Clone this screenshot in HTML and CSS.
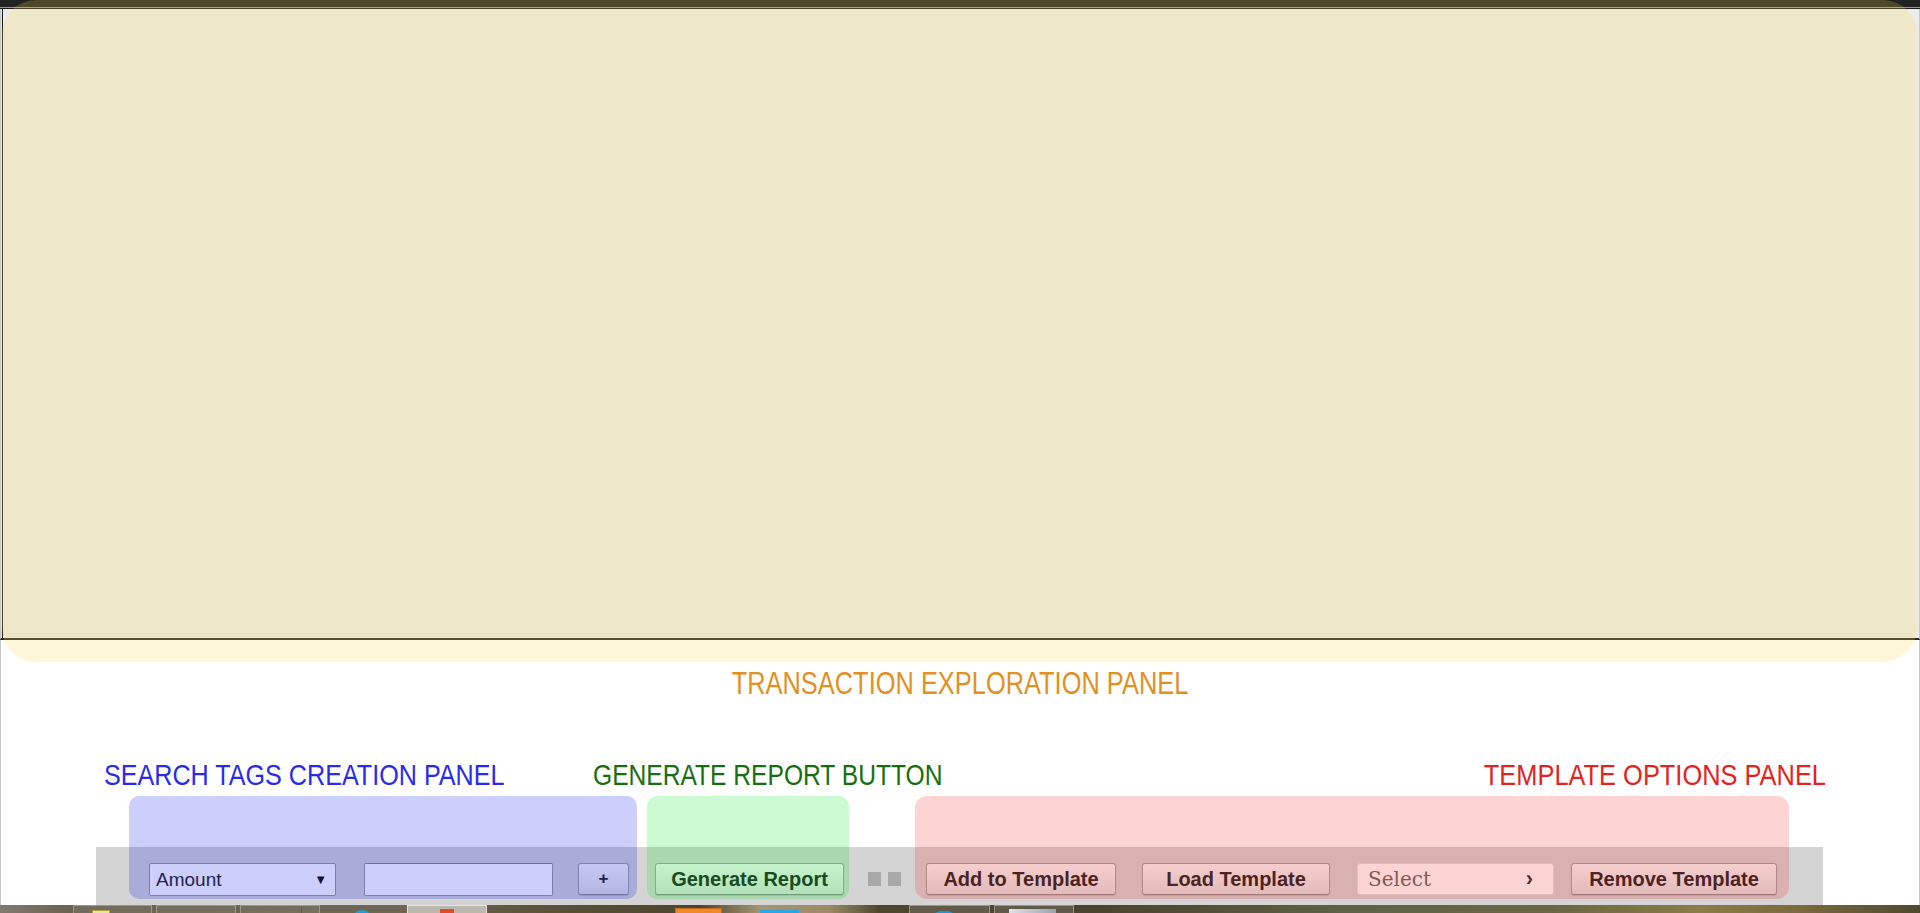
FILE: index.html
```html
<!DOCTYPE html>
<html lang="en">
<head>
<meta charset="utf-8">
<title>Transaction Explorer</title>
<link rel="stylesheet" href="styles.css">
</head>
<body>
<div class="app">
  <div class="topbar"></div>
  <main class="explorer"></main>
  <section class="lower">
    <h2 class="label label-transaction">TRANSACTION EXPLORATION PANEL</h2>
    <div class="label-row">
      <h2 class="label label-search">SEARCH TAGS CREATION PANEL</h2>
      <h2 class="label label-generate">GENERATE REPORT BUTTON</h2>
      <h2 class="label label-template">TEMPLATE OPTIONS PANEL</h2>
    </div>
    <div class="toolbar">
      <div class="field-select"><span>Amount</span><span class="caret">&#9660;</span></div>
      <input class="field-text" type="text">
      <button class="btn btn-plus">+</button>
      <button class="btn btn-generate">Generate Report</button>
      <div class="grip"><span></span><span></span></div>
      <button class="btn btn-add">Add to Template</button>
      <button class="btn btn-load">Load Template</button>
      <div class="template-select"><span>Select</span><span class="chev">&#8250;</span></div>
      <button class="btn btn-remove">Remove Template</button>
    </div>
  </section>
  <footer class="taskbar">
    <div class="tb-btn tb-b1"><i class="ic ic-yellow"></i></div>
    <div class="tb-btn tb-b2"></div>
    <div class="tb-btn tb-b3"><i class="ic ic-red"></i></div>
    <i class="ic ic-globe"></i>
    <div class="tb-btn tb-active"><i class="ic ic-orange-sm"></i></div>
    <i class="ic ic-orange"></i>
    <i class="ic ic-blue"></i>
    <div class="tb-btn tb-b4"><i class="ic ic-blue-sm"></i></div>
    <div class="tb-btn tb-b5"><i class="ic ic-gray"></i></div>
  </footer>
</div>
<div class="overlay overlay-yellow"></div>
<div class="overlay overlay-blue"></div>
<div class="overlay overlay-green"></div>
<div class="overlay overlay-red"></div>
</body>
</html>
```
FILE: styles.css
```css
* { box-sizing: border-box; }
html, body { margin: 0; padding: 0; }
body {
  width: 1920px;
  height: 913px;
  overflow: hidden;
  background: #fff;
  position: relative;
  font-family: "Liberation Sans", Arial, sans-serif;
}
.app {
  display: flex;
  flex-direction: column;
  height: 913px;
}
.topbar {
  height: 9px;
  flex: none;
  background: linear-gradient(#222 0 7px, #969696 7px 8px, #1b1b1b 8px 9px);
}
.explorer {
  height: 631px;
  flex: none;
  background: #ececec;
  border-left: 1px solid #c8c8c8;
  border-right: 1px solid #c8c8c8;
  border-bottom: 2px solid #2a2a2a;
  box-shadow: inset 1px 0 0 #e6e6e6, inset 2px 0 0 #1a1a1a;
}
.lower {
  height: 265px;
  flex: none;
  border-left: 1px solid #c8c8c8;
  border-right: 1px solid #c8c8c8;
  display: flex;
  flex-direction: column;
}
.label {
  margin: 0;
  font-family: "Liberation Sans", "Open Sans", sans-serif;
  font-weight: normal;
  font-size: 30px;
  line-height: 36px;
  height: 36px;
  white-space: nowrap;
  transform: scaleX(0.82);
  transform-origin: left center;
}
.label-transaction {
  margin-top: 26px;
  text-align: center;
  color: #e2901f;
  font-size: 31px;
  transform-origin: center center;
}
.label-row {
  display: flex;
  margin-top: 55px;
}
.label-search {
  color: #2a2aea;
  margin-left: 103px;
  width: 489px;
  transform: scaleX(0.838);
}
.label-generate { color: #176e0f; }
.label-template {
  color: #e32222;
  margin-left: auto;
  margin-right: 93px;
  transform: scaleX(0.847);
  transform-origin: right center;
}
.toolbar {
  margin-top: 54px;
  margin-left: 95px;
  width: 1727px;
  height: 58px;
  background: #d4d4d4;
  display: flex;
  align-items: flex-start;
  padding-top: 16px;
}
.field-select {
  margin-left: 53px;
  width: 187px;
  height: 33px;
  background: #fff;
  border: 1px solid #9a9a9a;
  border-radius: 2px;
  display: flex;
  align-items: center;
  justify-content: space-between;
  padding: 0 8px 0 6px;
  font-size: 19px;
  color: #2a2a2a;
}
.caret { font-size: 13px; color: #111; }
.field-text {
  margin: 0 0 0 28px;
  width: 189px;
  height: 33px;
  background: #fff;
  border: 1px solid #9c9c9c;
  border-top-color: #8a8a8a;
  border-radius: 2px;
  padding: 0;
}
.btn {
  height: 32px;
  margin: 0;
  padding: 0;
  border: 1px solid #a2a2a2;
  border-bottom-color: #8e8e8e;
  border-radius: 3px;
  background: linear-gradient(#f7f7f7, #e0e0e0);
  box-shadow: 0 1px 1px rgba(0, 0, 0, 0.12);
  font-family: "Liberation Sans", Arial, sans-serif;
  font-weight: bold;
  font-size: 20px;
  color: #222;
  text-align: center;
  white-space: nowrap;
}
.btn-plus { margin-left: 25px; width: 51px; font-size: 17px; }
.btn-generate { margin-left: 26px; width: 189px; }
.grip {
  margin-left: 24px;
  margin-top: 9px;
  width: 33px;
  display: flex;
  gap: 7px;
}
.grip span { width: 13px; height: 14px; background: #a8a8a8; }
.btn-add { margin-left: 25px; width: 190px; }
.btn-load { margin-left: 26px; width: 188px; }
.template-select {
  margin-left: 27px;
  width: 197px;
  height: 32px;
  background: #fff;
  border: 1px solid #e2e2e2;
  border-radius: 3px;
  display: flex;
  align-items: center;
  justify-content: space-between;
  padding: 0 20px 0 10px;
  font-family: "DejaVu Serif", "Liberation Serif", serif;
  font-size: 20px;
  color: #666;
}
.chev { font-family: "Liberation Sans", sans-serif; font-size: 22px; color: #333; font-weight: bold; }
.btn-remove { margin-left: 17px; width: 206px; }

.taskbar {
  height: 8px;
  flex: none;
  display: flex;
  align-items: flex-start;
  overflow: hidden;
  background: linear-gradient(90deg, #7f7a6e 0px, #6a6352 70px, #6f6754 400px, #5a5038 560px, #4d4530 700px, #a69672 760px, #9a8a66 830px, #4e4630 880px, #4a4330 1100px, #5f6246 1350px, #6a6644 1550px, #8c7c46 1700px, #7a6a3e 1800px, #4f4830 1920px);
}
.tb-btn {
  height: 10px;
  border: 1px solid #9e9684;
  border-bottom: none;
  background: rgba(255, 255, 255, 0.06);
  display: flex;
  align-items: flex-start;
}
.tb-b1 { margin-left: 73px; width: 79px; }
.tb-b2 { margin-left: 4px; width: 80px; }
.tb-b3 { margin-left: 4px; width: 80px; }
.tb-active { margin-left: 35px; width: 80px; background: #bdb8ae; border-color: #e8e4dc; }
.tb-b4 { margin-left: 110px; width: 81px; background: rgba(255,255,255,0.12); }
.tb-b5 { margin-left: 4px; width: 80px; background: rgba(255,255,255,0.12); }
.ic { display: block; flex: none; }
.ic-yellow { margin: 4px 0 0 18px; width: 18px; height: 6px; background: #e6e6a0; border: 1px solid #b0a040; border-bottom: none; }
.ic-red { margin: 1px 0 0 60px; width: 1px; height: 6px; background: #c03030; }
.ic-globe { margin: 5px 0 0 32px; width: 20px; height: 10px; border-radius: 10px 10px 0 0; background: #1e9ee0; }
.ic-orange-sm { margin: 3px 0 0 32px; width: 14px; height: 6px; background: #e04a2a; }
.ic-orange { margin: 3px 0 0 188px; width: 47px; height: 6px; background: #ee8a2c; border: 1px solid #c86818; }
.ic-blue { margin: 5px 0 0 38px; width: 39px; height: 4px; background: #2aa6e8; }
.ic-blue-sm { margin: 5px 0 0 24px; width: 20px; height: 6px; border-radius: 8px 8px 0 0; background: #1a96dc; }
.ic-gray { margin: 3px 0 0 14px; width: 47px; height: 6px; background: linear-gradient(90deg, #dfe4ea, #9aa2ac); }

.overlay { position: absolute; pointer-events: none; }
.overlay-yellow {
  left: 2px; top: 0; width: 1915px; height: 662px;
  border-radius: 34px;
  background: rgba(245, 217, 67, 0.21);
}
.overlay-blue {
  left: 129px; top: 796px; width: 508px; height: 103px;
  border-radius: 10px;
  background: rgba(0, 12, 235, 0.2);
}
.overlay-green {
  left: 647px; top: 796px; width: 202px; height: 103px;
  border-radius: 10px;
  background: rgba(0, 230, 30, 0.2);
}
.overlay-red {
  left: 915px; top: 796px; width: 874px; height: 103px;
  border-radius: 12px;
  background: rgba(240, 40, 40, 0.2);
}
```
